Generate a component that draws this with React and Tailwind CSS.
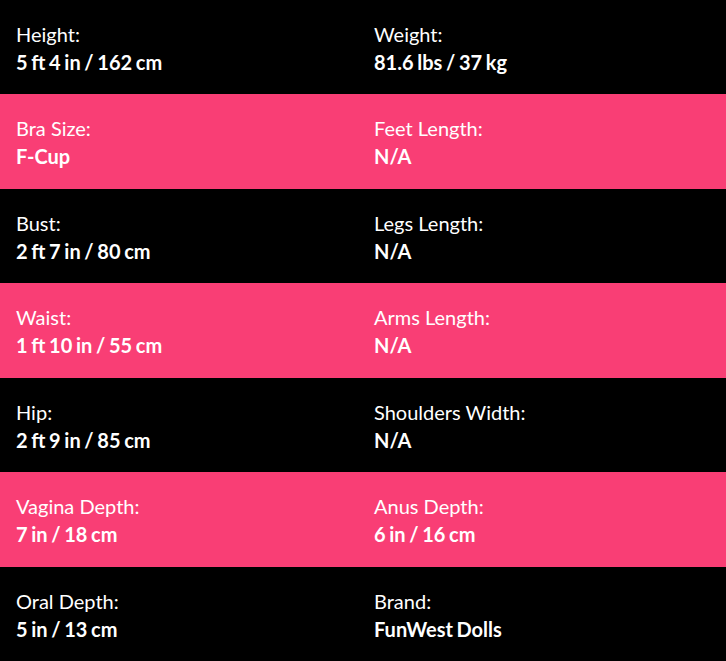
import React from "react"

const rows = [
  [["Height:", "5 ft 4 in / 162 cm"], ["Weight:", "81.6 lbs / 37 kg"]],
  [["Bra Size:", "F-Cup"], ["Feet Length:", "N/A"]],
  [["Bust:", "2 ft 7 in / 80 cm"], ["Legs Length:", "N/A"]],
  [["Waist:", "1 ft 10 in / 55 cm"], ["Arms Length:", "N/A"]],
  [["Hip:", "2 ft 9 in / 85 cm"], ["Shoulders Width:", "N/A"]],
  [["Vagina Depth:", "7 in / 18 cm"], ["Anus Depth:", "6 in / 16 cm"]],
  [["Oral Depth:", "5 in / 13 cm"], ["Brand:", "FunWest Dolls"]],
]

const Cell = ({ label, value }) => (
  <div className="pl-[16px] pt-[20px]">
    <div className="text-[20px] leading-[28px]">{label}</div>
    <div className="text-[20px] leading-[28px] font-bold [word-spacing:-1.2px]">{value}</div>
  </div>
)

export default function App() {
  return (
    <div className="w-[726px] h-[661px] flex flex-col bg-black text-white font-['Lato','Liberation_Sans',sans-serif]">
      {rows.map((row, i) => (
        <div
          key={i}
          className={
            "flex-1 grid grid-cols-[358px_1fr] " +
            (i % 2 === 1 ? "bg-[#f93e75]" : "bg-black")
          }
        >
          <Cell label={row[0][0]} value={row[0][1]} />
          <Cell label={row[1][0]} value={row[1][1]} />
        </div>
      ))}
    </div>
  )
}
